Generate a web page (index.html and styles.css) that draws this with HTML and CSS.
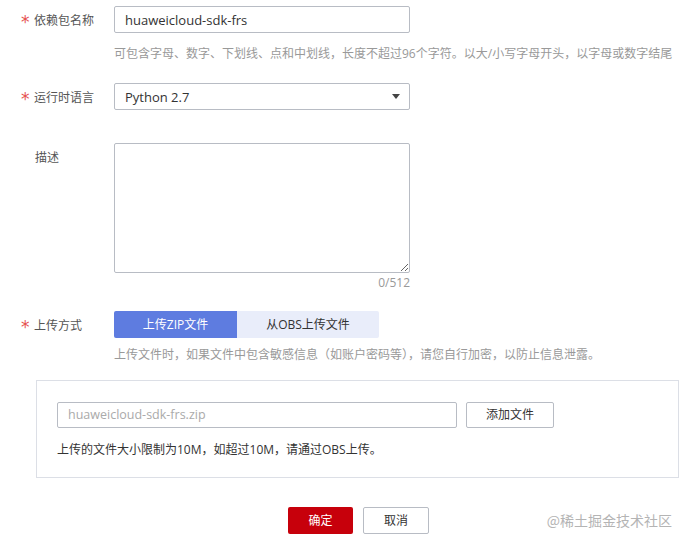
FILE: index.html
```html
<!DOCTYPE html>
<html lang="zh">
<head>
<meta charset="utf-8">
<link rel="stylesheet" href="styles.css">
</head>
<body>
<div class="form">
  <div class="row row-name">
    <div class="label"><span class="star">*</span>依赖包名称</div>
    <div class="field">
      <input class="input" type="text" value="huaweicloud-sdk-frs">
      <div class="hint">可包含字母、数字、下划线、点和中划线，长度不超过96个字符。以大/小写字母开头，以字母或数字结尾</div>
    </div>
  </div>
  <div class="row row-lang">
    <div class="label"><span class="star">*</span>运行时语言</div>
    <div class="field">
      <div class="select"><span>Python 2.7</span><span class="caret"></span></div>
    </div>
  </div>
  <div class="row row-desc">
    <div class="label label-top">描述</div>
    <div class="field">
      <textarea class="textarea"></textarea>
      <div class="counter">0/512</div>
    </div>
  </div>
  <div class="row row-upload">
    <div class="label"><span class="star">*</span>上传方式</div>
    <div class="field">
      <div class="tabs">
        <div class="tab tab-active">上传ZIP文件</div>
        <div class="tab">从OBS上传文件</div>
      </div>
      <div class="hint hint-upload">上传文件时，如果文件中包含敏感信息（如账户密码等），请您自行加密，以防止信息泄露。</div>
    </div>
  </div>
  <div class="box">
    <div class="file-row">
      <div class="file-input">huaweicloud-sdk-frs.zip</div>
      <div class="btn btn-add">添加文件</div>
    </div>
    <div class="box-note">上传的文件大小限制为10M，如超过10M，请通过OBS上传。</div>
  </div>
  <div class="actions">
    <div class="btn btn-ok">确定</div>
    <div class="btn btn-cancel">取消</div>
    <div class="watermark">@稀土掘金技术社区</div>
  </div>
</div>
</body>
</html>
```
FILE: styles.css
```css
* { box-sizing: border-box; }
html, body {
  margin: 0;
  padding: 0;
  background: #fff;
}
body {
  width: 688px;
  height: 538px;
  overflow: hidden;
  font-family: "Open Sans", "Noto Sans CJK SC", sans-serif;
  font-size: 12px;
  color: #575d6c;
}
.form {
  padding-top: 6px;
}
.row {
  display: flex;
}
.label {
  width: 114px;
  flex: none;
  display: flex;
  align-items: center;
  padding-left: 21px;
  height: 27px;
  font-size: 12px;
  color: #555;
  white-space: nowrap;
}
.label-top {
  align-items: flex-start;
  padding-left: 35px;
  line-height: 16px;
  padding-top: 7px;
}
.star {
  display: inline-block;
  width: 13px;
  height: 10px;
  color: #e5514f;
  font-size: 17px;
  font-family: "DejaVu Sans", sans-serif;
  line-height: 17px;
  overflow: visible;
  position: relative;
  top: -1px;
}
.field {
  width: 296px;
  flex: none;
}
.input, .select {
  display: block;
  width: 296px;
  height: 27px;
  border: 1px solid #b8bcc4;
  border-radius: 2px;
  padding: 0 10px;
  font-family: "Open Sans", sans-serif;
  font-size: 13px;
  color: #333;
  background: #fff;
  outline: none;
}
.select {
  display: flex;
  align-items: center;
  justify-content: space-between;
  padding-right: 9px;
}
.caret {
  width: 0;
  height: 0;
  border-left: 4px solid transparent;
  border-right: 4px solid transparent;
  border-top: 5px solid #444;
}
.hint {
  margin-top: 12px;
  line-height: 18px;
  color: #999;
  font-size: 12px;
  white-space: nowrap;
}
.row-lang {
  margin-top: 20px;
}
.row-desc {
  margin-top: 33px;
}
.textarea {
  display: block;
  width: 296px;
  height: 130px;
  border: 1px solid #b8bcc4;
  border-radius: 2px;
  resize: both;
  margin: 0;
  outline: none;
}
.counter {
  margin-top: 2px;
  text-align: right;
  line-height: 16px;
  color: #999;
  font-size: 12px;
}
.row-upload {
  margin-top: 20px;
}
.tabs {
  display: flex;
  height: 27px;
}
.tab {
  width: 142px;
  line-height: 27px;
  text-align: center;
  background: #e9edfa;
  color: #333;
  font-size: 12px;
  border-radius: 0 2px 2px 0;
}
.tab-active {
  width: 123px;
  background: #5e7ce0;
  color: #fff;
  border-radius: 2px 0 0 2px;
}
.hint-upload {
  margin-top: 8px;
}
.box {
  margin: 16px 0 0 36px;
  width: 643px;
  height: 98px;
  border: 1px solid #dcdfe6;
  padding: 21px 0 0 20px;
}
.file-row {
  display: flex;
  gap: 9px;
}
.file-input {
  width: 400px;
  height: 26px;
  line-height: 24px;
  border: 1px solid #b8bcc4;
  border-radius: 2px;
  padding: 0 10px;
  color: #aaa;
  font-size: 12.5px;
}
.btn {
  height: 26px;
  line-height: 24px;
  text-align: center;
  border-radius: 2px;
  font-size: 12px;
  border: 1px solid #b8bcc4;
  background: #fff;
  color: #333;
}
.btn-add {
  width: 88px;
}
.box-note {
  margin-top: 13px;
  line-height: 18px;
  color: #333;
  font-size: 12px;
}
.actions {
  display: flex;
  align-items: center;
  margin-top: 29px;
  padding-left: 288px;
}
.btn-ok {
  width: 65px;
  height: 27px;
  line-height: 27px;
  background: #c7000b;
  border: none;
  color: #fff;
}
.btn-cancel {
  width: 66px;
  height: 27px;
  line-height: 25px;
  margin-left: 10px;
}
.watermark {
  margin-left: auto;
  margin-right: 16px;
  color: #b4b4b4;
  font-size: 14px;
  font-family: "Noto Sans CJK SC", sans-serif;
  position: relative;
  top: -1px;
}
```
